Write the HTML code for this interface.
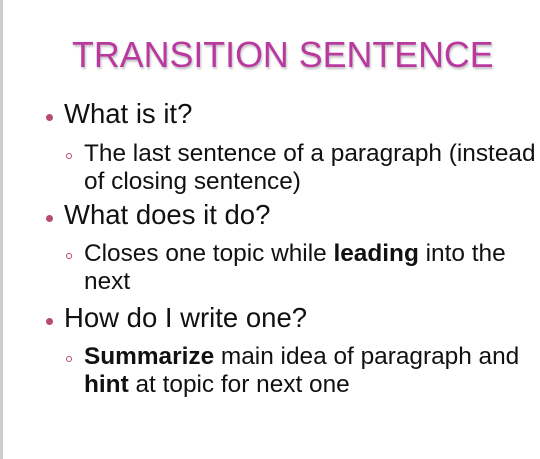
<!DOCTYPE html>
<html><head><style>
body{margin:0;width:540px;height:459px;background:#fff;position:relative;overflow:hidden;font-family:"Liberation Sans",sans-serif;}
.edge{position:absolute;left:0;top:0;width:3px;height:459px;background:#d0cdd0;}
.t{position:absolute;white-space:nowrap;line-height:1;}
.title{left:72px;top:38px;font-size:35.8px;color:#b9399f;text-shadow:1px 2px 2px rgba(0,0,0,.25);}
.l1{font-size:27.5px;color:#111;left:64px;}
.l2{font-size:24.4px;color:#111;left:84px;}
.dot{position:absolute;width:7px;height:7px;border-radius:50%;background:#b84a73;left:46px;}
.ring{position:absolute;width:4px;height:4px;border-radius:50%;border:1px solid #b84a73;left:66px;}
</style></head><body>
<div class="edge"></div>
<div class="t title">TRANSITION SENTENCE</div>
<div class="dot" style="top:114px"></div>
<div class="t l1" style="top:100px">What is it?</div>
<div class="ring" style="top:153px"></div>
<div class="t l2" style="top:142px">The last sentence of a paragraph (instead</div>
<div class="t l2" style="top:170px">of closing sentence)</div>
<div class="dot" style="top:215px"></div>
<div class="t l1" style="top:201px">What does it do?</div>
<div class="ring" style="top:253px"></div>
<div class="t l2" style="top:242px">Closes one topic while <b>leading</b> into the</div>
<div class="t l2" style="top:270px">next</div>
<div class="dot" style="top:318px"></div>
<div class="t l1" style="top:304px">How do I write one?</div>
<div class="ring" style="top:356px"></div>
<div class="t l2" style="top:345px"><b>Summarize</b> main idea of paragraph and</div>
<div class="t l2" style="top:373px"><b>hint</b> at topic for next one</div>
</body></html>
